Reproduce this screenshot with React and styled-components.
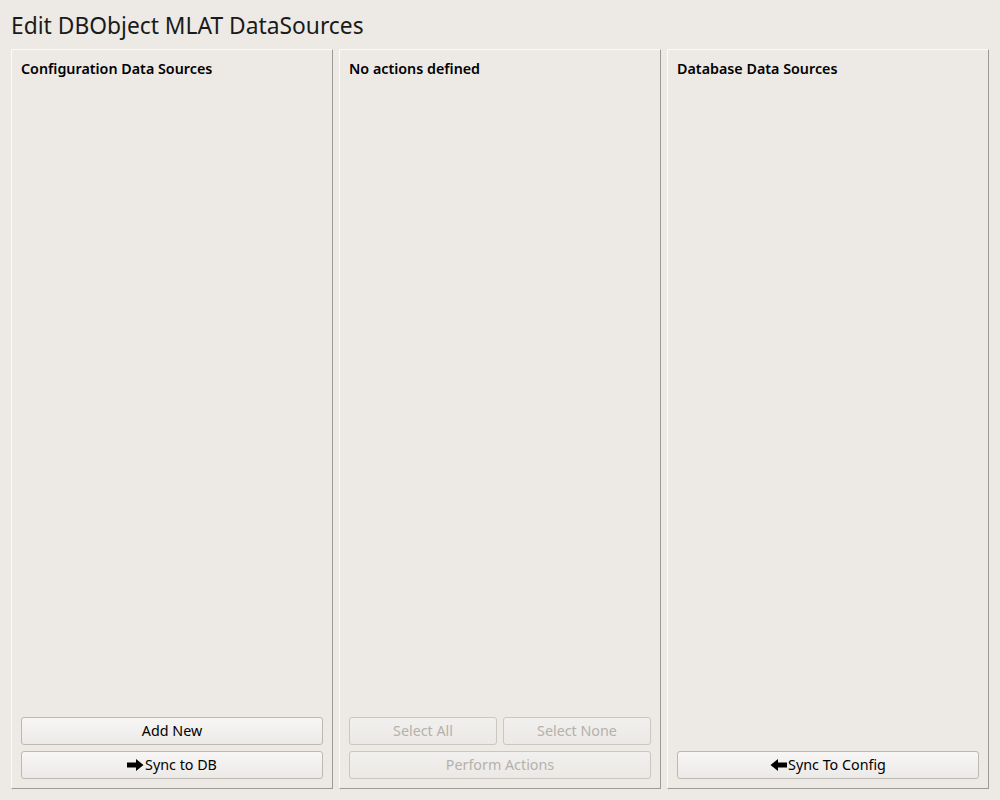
import styled, { createGlobalStyle } from 'styled-components'

const GlobalStyle = createGlobalStyle`
  html, body {
    margin: 0;
    padding: 0;
    background: #edeae6;
    font-family: "Noto Sans", "DejaVu Sans", sans-serif;
    color: #000;
  }
`

function Arrow({ left }) {
  return <svg width='17' height='12' viewBox='0 0 17 12' style={{ transform: left ? 'scaleX(-1)' : 'none' }}>
    <path d='M0 3.5 H9 V0 L16.5 6 L9 12 V8.5 H0 Z' fill='#000' />
  </svg>
}

export default function App() {
  return <Page>
    <GlobalStyle />
    <Title>Edit DBObject MLAT DataSources</Title>
    <Columns>
      <Panel>
        <Heading>Configuration Data Sources</Heading>
        <Buttons>
          <Button>Add New</Button>
          <Button><Arrow />Sync to DB</Button>
        </Buttons>
      </Panel>
      <Panel>
        <Heading>No actions defined</Heading>
        <Buttons>
          <Pair>
            <Button disabled>Select All</Button>
            <Button disabled>Select None</Button>
          </Pair>
          <Button disabled>Perform Actions</Button>
        </Buttons>
      </Panel>
      <Panel>
        <Heading>Database Data Sources</Heading>
        <Buttons>
          <Button><Arrow left />Sync To Config</Button>
        </Buttons>
      </Panel>
    </Columns>
  </Page>
}

const Page = styled.div`
  height: 800px;
  box-sizing: border-box;
  padding: 11px;
  display: flex;
  flex-direction: column;
`
const Title = styled.h1`
  margin: 0;
  height: 38px;
  line-height: 30px;
  font-size: 22.8px;
  font-weight: normal;
  color: #1a1a1a;
`
const Columns = styled.div`
  flex: 1;
  display: grid;
  grid-template-columns: repeat(3, 1fr);
  gap: 6px;
`
const Panel = styled.div`
  display: flex;
  flex-direction: column;
  border: 1px solid #9d9a96;
  border-top-color: #fbfaf9;
  border-left-color: #fbfaf9;
  padding: 9px 9px 9px 9px;
`
const Heading = styled.div`
  flex: 1;
  font-size: 14.3px;
  font-weight: 600;
  line-height: 19px;
`
const Buttons = styled.div`
  display: flex;
  flex-direction: column;
  gap: 6px;
`
const Pair = styled.div`
  display: grid;
  grid-template-columns: 1fr 1fr;
  gap: 6px;
`
const Button = styled.button`
  height: 28px;
  display: flex;
  align-items: center;
  justify-content: center;
  gap: 1px;
  border: 1px solid #bcb8b3;
  border-radius: 3px;
  background: linear-gradient(#f7f6f5, #eceae7);
  font-family: "Noto Sans", "DejaVu Sans", sans-serif;
  font-size: 14.3px;
  color: #000;
  padding: 0 0 1px 0;
  &:disabled {
    color: #b5b1ac;
    background: linear-gradient(#f2f0ee, #ebe8e5);
    border-color: #cac6c1;
  }
`
